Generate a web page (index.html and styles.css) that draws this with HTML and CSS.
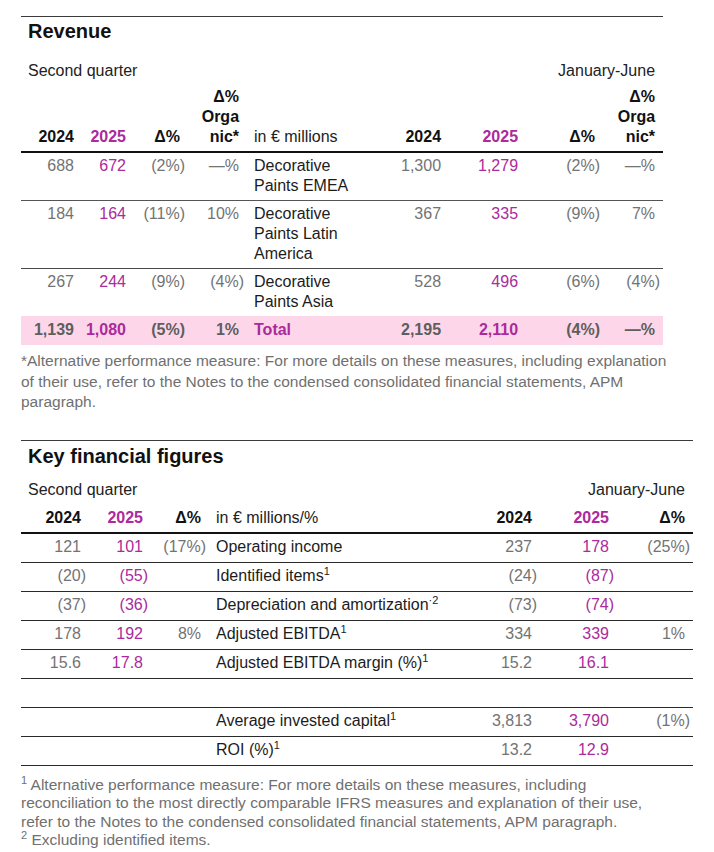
FILE: index.html
```html
<!DOCTYPE html>
<html lang="en">
<head>
<meta charset="utf-8">
<title>Revenue and key financial figures</title>
<link rel="stylesheet" href="styles.css">
</head>
<body>
<main class="page">
  <section class="block revenue">
    <h2 class="title">Revenue</h2>
    <table class="tbl rev">
      <colgroup>
        <col class="c61"><col class="c52"><col class="c54"><col class="c59"><col class="c113"><col class="c89"><col class="c77"><col class="c77"><col class="c60">
      </colgroup>
      <thead>
        <tr class="period">
          <th colspan="4" class="pl">Second quarter</th>
          <th></th>
          <th colspan="4" class="pr">January-June</th>
        </tr>
        <tr class="head">
          <th class="num">2024</th>
          <th class="num mag">2025</th>
          <th class="num">Δ%</th>
          <th class="num">Δ%<br>Orga<br>nic*</th>
          <th class="lbl reg">in € millions</th>
          <th class="num">2024</th>
          <th class="num mag">2025</th>
          <th class="num">Δ%</th>
          <th class="num">Δ%<br>Orga<br>nic*</th>
        </tr>
      </thead>
      <tbody>
        <tr class="light">
          <td class="num g">688</td>
          <td class="num m">672</td>
          <td class="num g neg">(2%)</td>
          <td class="num g">—%</td>
          <td class="lbl">Decorative Paints EMEA</td>
          <td class="num g">1,300</td>
          <td class="num m">1,279</td>
          <td class="num g neg">(2%)</td>
          <td class="num g">—%</td>
        </tr>
        <tr>
          <td class="num g">184</td>
          <td class="num m">164</td>
          <td class="num g neg">(11%)</td>
          <td class="num g">10%</td>
          <td class="lbl">Decorative Paints Latin America</td>
          <td class="num g">367</td>
          <td class="num m">335</td>
          <td class="num g neg">(9%)</td>
          <td class="num g">7%</td>
        </tr>
        <tr class="nob">
          <td class="num g">267</td>
          <td class="num m">244</td>
          <td class="num g neg">(9%)</td>
          <td class="num g neg">(4%)</td>
          <td class="lbl">Decorative Paints Asia</td>
          <td class="num g">528</td>
          <td class="num m">496</td>
          <td class="num g neg">(6%)</td>
          <td class="num g neg">(4%)</td>
        </tr>
        <tr class="total">
          <td class="num g">1,139</td>
          <td class="num m">1,080</td>
          <td class="num g neg">(5%)</td>
          <td class="num g">1%</td>
          <td class="lbl m">Total</td>
          <td class="num g">2,195</td>
          <td class="num m">2,110</td>
          <td class="num g neg">(4%)</td>
          <td class="num g">—%</td>
        </tr>
      </tbody>
    </table>
    <p class="note note-rev">*Alternative performance measure: For more details on these measures, including explanation<br>of their use, refer to the Notes to the condensed consolidated financial statements, APM<br>paragraph.</p>
  </section>

  <section class="block key">
    <h2 class="title">Key financial figures</h2>
    <table class="tbl kff">
      <colgroup>
        <col class="c68"><col class="c62"><col class="c58"><col class="c251"><col class="c80"><col class="c77"><col class="c76">
      </colgroup>
      <thead>
        <tr class="period">
          <th colspan="3" class="pl">Second quarter</th>
          <th></th>
          <th colspan="3" class="pr">January-June</th>
        </tr>
        <tr class="head">
          <th class="num">2024</th>
          <th class="num mag">2025</th>
          <th class="num">Δ%</th>
          <th class="lbl reg">in € millions/%</th>
          <th class="num">2024</th>
          <th class="num mag">2025</th>
          <th class="num">Δ%</th>
        </tr>
      </thead>
      <tbody>
        <tr>
          <td class="num g">121</td>
          <td class="num m">101</td>
          <td class="num g neg">(17%)</td>
          <td class="lbl">Operating income</td>
          <td class="num g">237</td>
          <td class="num m">178</td>
          <td class="num g neg">(25%)</td>
        </tr>
        <tr>
          <td class="num g neg">(20)</td>
          <td class="num m neg">(55)</td>
          <td class="num"></td>
          <td class="lbl">Identified items<sup>1</sup></td>
          <td class="num g neg">(24)</td>
          <td class="num m neg">(87)</td>
          <td class="num"></td>
        </tr>
        <tr>
          <td class="num g neg">(37)</td>
          <td class="num m neg">(36)</td>
          <td class="num"></td>
          <td class="lbl">Depreciation and amortization<sup>·2</sup></td>
          <td class="num g neg">(73)</td>
          <td class="num m neg">(74)</td>
          <td class="num"></td>
        </tr>
        <tr>
          <td class="num g">178</td>
          <td class="num m">192</td>
          <td class="num g">8%</td>
          <td class="lbl">Adjusted EBITDA<sup>1</sup></td>
          <td class="num g">334</td>
          <td class="num m">339</td>
          <td class="num g">1%</td>
        </tr>
        <tr>
          <td class="num g">15.6</td>
          <td class="num m">17.8</td>
          <td class="num"></td>
          <td class="lbl">Adjusted EBITDA margin (%)<sup>1</sup></td>
          <td class="num g">15.2</td>
          <td class="num m">16.1</td>
          <td class="num"></td>
        </tr>
        <tr class="empty">
          <td></td><td></td><td></td><td></td><td></td><td></td><td></td>
        </tr>
        <tr>
          <td class="num"></td>
          <td class="num"></td>
          <td class="num"></td>
          <td class="lbl">Average invested capital<sup>1</sup></td>
          <td class="num g">3,813</td>
          <td class="num m">3,790</td>
          <td class="num g neg">(1%)</td>
        </tr>
        <tr>
          <td class="num"></td>
          <td class="num"></td>
          <td class="num"></td>
          <td class="lbl">ROI (%)<sup>1</sup></td>
          <td class="num g">13.2</td>
          <td class="num m">12.9</td>
          <td class="num"></td>
        </tr>
      </tbody>
    </table>
    <p class="note note-key"><sup>1</sup> Alternative performance measure: For more details on these measures, including<br>reconciliation to the most directly comparable IFRS measures and explanation of their use,<br>refer to the Notes to the condensed consolidated financial statements, APM paragraph.<br><sup>2</sup> Excluding identified items.</p>
  </section>
</main>
</body>
</html>
```
FILE: styles.css
```css
html, body {
  margin: 0;
  padding: 0;
  background: #ffffff;
}

body {
  font-family: "Liberation Sans", Arial, Helvetica, sans-serif;
  font-size: 16px;
  line-height: 20px;
  color: #1c1c1c;
}

.page {
  padding: 16px 0 0 21px;
}

.block {
  border-top: 1px solid #3a3a3a;
}

.revenue {
  width: 642px;
}

.key {
  width: 672px;
  margin-top: 27px;
}

.title {
  margin: 0;
  padding: 2px 0 0 7px;
  font-size: 20px;
  line-height: 24px;
  font-weight: bold;
  color: #111;
}

.key .title {
  padding-top: 3px;
}

.tbl {
  border-collapse: collapse;
  table-layout: fixed;
  width: 100%;
}

.tbl th,
.tbl td {
  padding: 0;
  font-weight: normal;
  vertical-align: top;
}

.c61 { width: 61px; }
.c52 { width: 52px; }
.c54 { width: 54px; }
.c59 { width: 59px; }
.c113 { width: 113px; }
.c89 { width: 89px; }
.c77 { width: 77px; }
.c60 { width: 60px; }
.c68 { width: 68px; }
.c62 { width: 62px; }
.c58 { width: 58px; }
.c251 { width: 251px; }
.c80 { width: 80px; }
.c76 { width: 76px; }

.period th {
  color: #222;
  font-weight: normal;
}

.rev .period th {
  padding-top: 18px;
}

.kff .period th {
  padding-top: 12px;
}

.period .pl {
  text-align: left;
  padding-left: 7px;
}

.period .pr {
  text-align: right;
  padding-right: 8px;
}

.head th {
  font-weight: bold;
  color: #111;
  vertical-align: bottom;
  padding-top: 6px;
  padding-bottom: 4px;
  border-bottom: 2px solid #111;
}

.kff .head th {
  padding-top: 8px;
  padding-bottom: 4px;
}

.head th.reg {
  font-weight: normal;
  color: #222;
}

.head th.mag {
  color: #ab2a9c;
}

.num {
  text-align: right;
  padding-right: 8px !important;
}

.num.neg {
  padding-right: 3px !important;
}

.lbl {
  text-align: left;
  padding-left: 7px !important;
}

.g {
  color: #737373;
}

.m {
  color: #ab2a9c;
}

.rev tbody td {
  padding-top: 3px;
  padding-bottom: 4px;
  border-bottom: 1px solid #4a4a4a;
}

.rev tbody tr.light td {
  border-bottom-color: #555;
}

.rev tbody tr.nob td {
  border-bottom: 0;
}

.rev tbody tr.total td {
  background: #fdd7e9;
  font-weight: bold;
  padding-top: 4px;
  padding-bottom: 5px;
  border-bottom: 0;
}

.rev tbody tr.total td.g {
  color: #5e5e5e;
}

.kff tbody td {
  padding-top: 3px;
  padding-bottom: 5px;
  border-bottom: 1px solid #2a2a2a;
}

.kff tbody tr.empty td {
  height: 20px;
}

sup {
  font-size: 11px;
  line-height: 0;
  vertical-align: 6px;
}

.note {
  margin: 0;
  color: #707070;
}

.note-rev {
  margin-top: 6px;
  line-height: 20.5px;
  font-size: 15.5px;
  white-space: nowrap;
}

.note-key {
  margin-top: 10px;
  line-height: 18.5px;
  font-size: 15.5px;
  white-space: nowrap;
}
```
